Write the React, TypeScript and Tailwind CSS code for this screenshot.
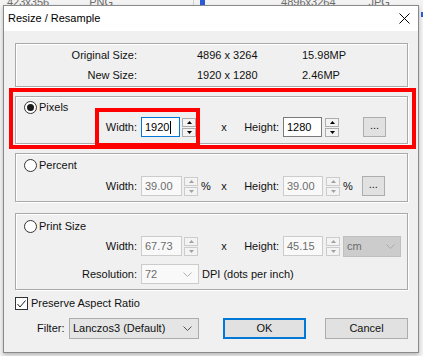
import React from "react";

const Spinner = ({ disabled = false }: { disabled?: boolean }) => {
  const border = disabled ? "border-[#cccccc]" : "border-[#adadad]";
  const fill = disabled ? "#a0a0a0" : "#000000";
  return (
    <div className="flex h-[19px] w-[14px] flex-col gap-[1px]">
      <div className={`flex h-[9px] items-center justify-center border ${border} bg-[#f3f3f3]`}>
        <svg width="5" height="3" viewBox="0 0 5 3">
          <path d="M0 3h5L2.5 0z" fill={fill} />
        </svg>
      </div>
      <div className={`flex h-[9px] items-center justify-center border ${border} bg-[#f3f3f3]`}>
        <svg width="5" height="3" viewBox="0 0 5 3">
          <path d="M0 0h5L2.5 3z" fill={fill} />
        </svg>
      </div>
    </div>
  );
};

const Radio = ({ checked = false }: { checked?: boolean }) => (
  <span className="flex h-[13px] w-[13px] items-center justify-center rounded-full border border-[#333333] bg-white">
    {checked && <span className="h-[7px] w-[7px] rounded-full bg-[#1b1b1b]" />}
  </span>
);

const Chevron = ({ color }: { color: string }) => (
  <svg width="9" height="5" viewBox="0 0 9 5">
    <path d="M0.5 0.5l4 4 4-4" fill="none" stroke={color} />
  </svg>
);

const Field = ({
  value,
  width,
  disabled = false,
  focused = false,
}: {
  value: string;
  width: string;
  disabled?: boolean;
  focused?: boolean;
}) => (
  <div
    className={`flex h-[20px] items-center pl-[3px] ${width} ${
      focused
        ? "border border-[#0078d7] bg-white text-black"
        : disabled
          ? "border border-[#cccccc] bg-[#f9f9f9] text-[#6d6d6d]"
          : "border border-[#7a7a7a] bg-white text-black"
    }`}
  >
    {value}
    {focused && <span className="ml-[1px] h-[13px] w-[1px] bg-black" />}
  </div>
);

const DotsButton = () => (
  <div className="flex h-[20px] w-[23px] items-center justify-center border border-[#adadad] bg-[#e1e1e1] pb-[3px]">
    ...
  </div>
);

// one width/height row; the label columns line up across all three groups
const SizeRow = ({
  w,
  h,
  wWidth,
  hWidth,
  disabled = false,
  focused = false,
  unit,
  tail,
}: {
  w: string;
  h: string;
  wWidth: string;
  hWidth: string;
  disabled?: boolean;
  focused?: boolean;
  unit?: string;
  tail: React.ReactNode;
}) => (
  <div className="flex h-[20px] items-center">
    <div className="w-[121px] text-right">Width:</div>
    <div className="ml-[4px] flex w-[78px] items-center">
      <Field value={w} width={wWidth} disabled={disabled} focused={focused} />
      <div className="ml-[2px]">
        <Spinner disabled={disabled} />
      </div>
      {unit && <span className="ml-[3px]">{unit}</span>}
    </div>
    <div className="w-[10px] text-center">x</div>
    <div className="w-[50px] text-right">Height:</div>
    <div className="ml-[4px] flex items-center">
      <Field value={h} width={hWidth} disabled={disabled} />
      <div className="ml-[3px]">
        <Spinner disabled={disabled} />
      </div>
      {tail}
    </div>
  </div>
);

const GroupBox = ({ className = "", children }: { className?: string; children: React.ReactNode }) => (
  <div
    className={`border border-[#a9a9a9] shadow-[inset_1px_1px_0_#ffffff,1px_1px_0_#ffffff] ${className}`}
  >
    {children}
  </div>
);

export default function App() {
  return (
    <div className="flex h-[356px] w-[423px] flex-col overflow-hidden bg-[#f3f3f3] font-['Liberation_Sans',Arial,sans-serif] text-[11px] text-[#111111]">
      {/* list behind the dialog */}
      <div className="flex h-[5px] items-end overflow-hidden text-[#6d6d6d]">
        <span className="ml-[7px] mb-[-3px] leading-none">423x356</span>
        <span className="ml-[40px] mb-[-3px] leading-none">PNG</span>
        <span className="ml-[80px] h-[5px] w-[1px] bg-[#d0d0d0]" />
        <span className="ml-[6px] h-[5px] w-[5px] bg-[#2a5bd7]" />
        <span className="ml-[76px] mb-[-3px] leading-none">4896x3264</span>
        <span className="ml-[33px] mb-[-3px] leading-none">JPG</span>
      </div>

      <div className="flex">
        <div className="w-[3px]" />
        <div className="flex h-[348px] w-[416px] flex-col border border-[#8a8a8a] bg-[#f0f0f0] shadow-[0_2px_4px_rgba(0,0,0,0.25)]">
          {/* title bar */}
          <div className="flex h-[25px] items-center justify-between bg-white pl-[4px] pr-[8px] text-[#000000]">
            <span>Resize / Resample</span>
            <svg width="11" height="11" viewBox="0 0 11 11">
              <path d="M0.5 0.5l10 10M10.5 0.5l-10 10" stroke="#000" strokeWidth="1" />
            </svg>
          </div>

          <div className="flex flex-1 flex-col pl-[11px] pr-[10px]">
            <GroupBox className="mt-[12px] flex h-[44px] flex-col justify-center gap-[7px]">
              <div className="flex h-[13px] items-center">
                <div className="w-[121px] text-right">Original Size:</div>
                <div className="ml-[60px] w-[105px]">4896 x 3264</div>
                <div>15.98MP</div>
              </div>
              <div className="flex h-[13px] items-center">
                <div className="w-[121px] text-right">New Size:</div>
                <div className="ml-[60px] w-[105px]">1920 x 1280</div>
                <div>2.46MP</div>
              </div>
            </GroupBox>

            {/* red annotation around the Pixels group */}
            <div className="relative mt-[1px] -ml-[6px] -mr-[8px] border-4 border-[#ff0000] pt-[4px] pb-[1px] pl-[2px] pr-[4px]">
              <GroupBox className="h-[48px] pl-[8px] pt-[4px]">
                <div className="flex h-[13px] items-center gap-[2px]">
                  <Radio checked />
                  <span>Pixels</span>
                </div>
                <div className="-ml-[8px] mt-[3px]">
                  <SizeRow
                    w="1920"
                    h="1280"
                    wWidth="w-[39px]"
                    hWidth="w-[39px]"
                    focused
                    tail={
                      <div className="ml-[24px]">
                        <DotsButton />
                      </div>
                    }
                  />
                </div>
              </GroupBox>
              <div className="absolute left-[82px] top-[16px] h-[39px] w-[105px] border-4 border-[#ff0000]" />
            </div>

            <GroupBox className="mt-[4px] h-[49px] pl-[8px] pt-[5px]">
              <div className="flex h-[13px] items-center gap-[2px]">
                <Radio />
                <span>Percent</span>
              </div>
              <div className="-ml-[8px] mt-[4px]">
                <SizeRow
                  w="39.00"
                  h="39.00"
                  wWidth="w-[41px]"
                  hWidth="w-[40px]"
                  disabled
                  unit="%"
                  tail={
                    <>
                      <span className="ml-[3px]">%</span>
                      <div className="ml-[9px]">
                        <DotsButton />
                      </div>
                    </>
                  }
                />
              </div>
            </GroupBox>

            <GroupBox className="mt-[11px] h-[77px] pl-[8px] pt-[6px]">
              <div className="flex h-[13px] items-center gap-[2px]">
                <Radio />
                <span>Print Size</span>
              </div>
              <div className="-ml-[8px] mt-[3px]">
                <SizeRow
                  w="67.73"
                  h="45.15"
                  wWidth="w-[41px]"
                  hWidth="w-[40px]"
                  disabled
                  tail={
                    <div className="ml-[3px] flex h-[21px] w-[58px] items-center justify-between border border-[#bfbfbf] bg-[#cccccc] pl-[3px] pr-[5px] text-[#6d6d6d]">
                      <span>cm</span>
                      <Chevron color="#a8a8a8" />
                    </div>
                  }
                />
              </div>
              <div className="-ml-[8px] mt-[8px] flex h-[20px] items-center">
                <div className="w-[121px] text-right">Resolution:</div>
                <div className="ml-[4px] flex h-[20px] w-[58px] items-center justify-between border border-[#cccccc] bg-[#f9f9f9] pl-[3px] pr-[6px] text-[#6d6d6d]">
                  <span>72</span>
                  <Chevron color="#b0b0b0" />
                </div>
                <span className="ml-[3px]">DPI (dots per inch)</span>
              </div>
            </GroupBox>

            <div className="mt-[7px] flex h-[13px] items-center gap-[3px]">
              <span className="flex h-[13px] w-[13px] items-center justify-center border border-[#333333] bg-white">
                <svg width="9" height="8" viewBox="0 0 9 8">
                  <path d="M0.5 4l2.5 3 5.5-6.5" fill="none" stroke="#222" strokeWidth="1" />
                </svg>
              </span>
              <span>Preserve Aspect Ratio</span>
            </div>

            <div className="mt-[8px] flex h-[21px] items-center">
              <span className="ml-[22px] w-[27px]">Filter:</span>
              <div className="ml-[5px] flex h-[21px] w-[130px] items-center justify-between border border-[#adadad] bg-[#e5e5e5] pl-[3px] pr-[6px]">
                <span>Lanczos3 (Default)</span>
                <Chevron color="#555555" />
              </div>
              <div className="ml-[24px] flex h-[21px] w-[83px] items-center justify-center border-2 border-[#0078d7] bg-[#e1e1e1]">
                OK
              </div>
              <div className="ml-[19px] flex h-[21px] w-[83px] items-center justify-center border border-[#adadad] bg-[#e1e1e1]">
                Cancel
              </div>
            </div>
          </div>
        </div>
        <div className="flex-1 pt-[7px]">
          <div className="ml-[2px] h-[5px] w-[2px] bg-[#2a5bd7]" />
        </div>
      </div>
    </div>
  );
}
